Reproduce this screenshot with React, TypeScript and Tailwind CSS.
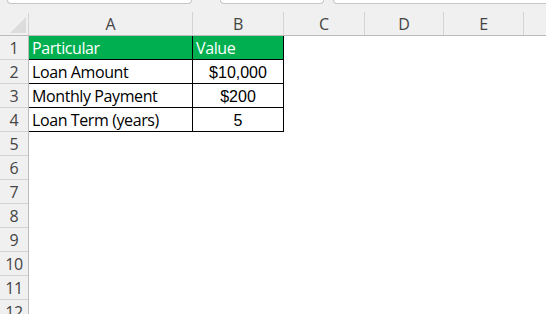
import React from "react";

const cols = [
  { label: "A", w: "w-[164px]" },
  { label: "B", w: "w-[91px]" },
  { label: "C", w: "w-[81px]" },
  { label: "D", w: "w-[79px]" },
  { label: "E", w: "w-[80px]" },
];

const data = [
  ["Loan Amount", "$10,000"],
  ["Monthly Payment", "$200"],
  ["Loan Term (years)", "5"],
];

const head = "font-['Open_Sans',sans-serif] text-[16px] tracking-[-0.3px]";
const label = "font-['Open_Sans',sans-serif] text-[16px] tracking-[-0.4px]";

const App = () => {
  return (
    <div className="w-[546px] h-[314px] overflow-hidden bg-white flex flex-col">
      {/* ribbon boxes peeking in at the top */}
      <div className="h-[12px] bg-[#f0f0f0] flex gap-[28px] pl-[7px] shrink-0">
        <div className="w-[185px] h-[4px] bg-white border border-t-0 border-[#c6c6c6] rounded-b-[5px]" />
        <div className="w-[104px] h-[4px] bg-white border border-t-0 border-[#c6c6c6] rounded-b-[5px]" />
        <div className="flex-1 h-[4px] bg-white border border-t-0 border-r-0 border-[#c6c6c6] rounded-bl-[5px] -ml-[19px]" />
      </div>

      {/* column headers */}
      <div className="flex h-[24px] bg-[#f0f0f0] border-b border-[#bcbcbc] shrink-0">
        <div className="w-[29px] flex items-end justify-end pr-[2px] pb-[2px] border-r border-[#d4d4d4] mt-[1px]">
          <div className="w-0 h-0 border-l-[16px] border-l-transparent border-b-[16px] border-b-[#dcdcdc]" />
        </div>
        {cols.map((c) => (
          <div
            key={c.label}
            className={`${c.w} border-r border-[#d4d4d4] flex items-center justify-center text-[#444] ${head}`}
          >
            {c.label}
          </div>
        ))}
        <div className="flex-1" />
      </div>

      <div className="flex flex-1">
        {/* row headers */}
        <div className="w-[29px] bg-[#f0f0f0] border-r border-[#bcbcbc] flex flex-col shrink-0">
          {Array.from({ length: 12 }, (_, i) => (
            <div
              key={i}
              className={`h-[24px] shrink-0 border-b border-[#d4d4d4] flex items-center justify-center text-[#444] ${head}`}
            >
              {i + 1}
            </div>
          ))}
        </div>

        {/* cells */}
        <div className="flex flex-col">
          <div className="flex h-[24px] bg-[#00b050] text-white border-b border-black">
            <div className={`w-[164px] px-[3px] flex items-center pt-[1px] border-r border-black ${label}`}>
              Particular
            </div>
            <div className={`w-[91px] px-[3px] flex items-center pt-[1px] border-r border-black ${label}`}>
              Value
            </div>
          </div>
          {data.map(([k, v]) => (
            <div key={k} className="flex h-[24px] border-b border-black text-black">
              <div className={`w-[164px] px-[3px] flex items-center pt-[1px] border-r border-black ${label}`}>
                {k}
              </div>
              <div className="w-[91px] flex items-center justify-center pt-[2px] border-r border-black font-['Liberation_Sans',sans-serif] text-[16px]">
                {v}
              </div>
            </div>
          ))}
        </div>
      </div>
    </div>
  );
};

export default App;
